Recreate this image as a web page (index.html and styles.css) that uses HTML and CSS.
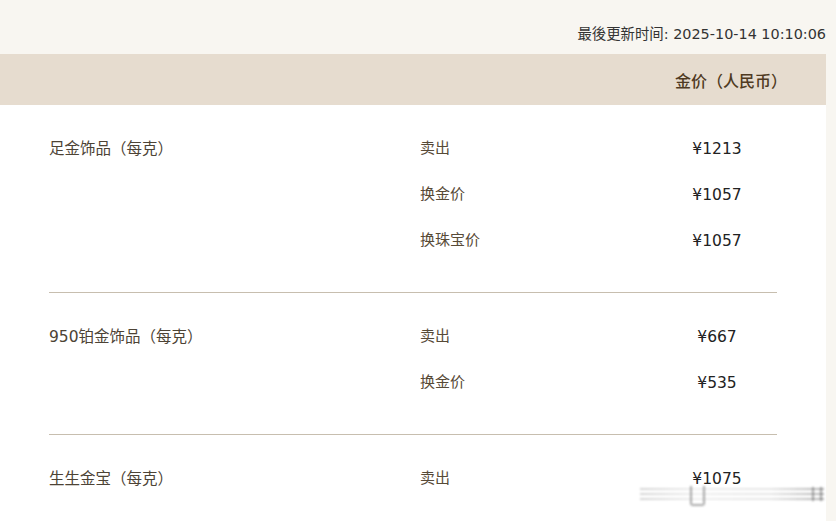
FILE: index.html
```html
<!DOCTYPE html>
<html lang="zh">
<head>
<meta charset="utf-8">
<title>金价</title>
<link rel="stylesheet" href="styles.css">
</head>
<body>
<div class="page">
  <div class="updated">最後更新时间: 2025-10-14 10:10:06</div>
  <div class="panel">
    <div class="head"><span class="head-title">金价（人民币）</span></div>
    <div class="group">
      <div class="name">足金饰品（每克）</div>
      <div class="items">
        <div class="row"><span class="label">卖出</span><span class="price">¥1213</span></div>
        <div class="row"><span class="label">换金价</span><span class="price">¥1057</span></div>
        <div class="row"><span class="label">换珠宝价</span><span class="price">¥1057</span></div>
      </div>
    </div>
    <div class="group">
      <div class="name">950铂金饰品（每克）</div>
      <div class="items">
        <div class="row"><span class="label">卖出</span><span class="price">¥667</span></div>
        <div class="row"><span class="label">换金价</span><span class="price">¥535</span></div>
      </div>
    </div>
    <div class="group last">
      <div class="name">生生金宝（每克）</div>
      <div class="items">
        <div class="row"><span class="label">卖出</span><span class="price">¥1075</span></div>
      </div>
    </div>
  </div>
  <div class="watermark">
    <span class="wm-line l1"></span>
    <span class="wm-line l2"></span>
    <span class="wm-line l3"></span>
    <span class="wm-mark"></span>
    <span class="wm-end"></span>
  </div>
</div>
</body>
</html>
```
FILE: styles.css
```css
html, body {
  margin: 0;
  padding: 0;
  background: #f8f6f1;
  height: 100%;
  overflow: hidden;
}
.page {
  position: relative;
  width: 836px;
  height: 521px;
  font-family: "DejaVu Sans", "Noto Sans CJK SC", sans-serif;
}
.updated {
  height: 54px;
  box-sizing: border-box;
  padding: 25px 10px 0 0;
  text-align: right;
  font-size: 14.4px;
  line-height: 18px;
  color: #333;
}
.panel {
  width: 826px;
  background: #fff;
  height: 467px;
}
.head {
  height: 51px;
  background: #e6dccf;
  display: flex;
  align-items: center;
  justify-content: flex-end;
  padding-right: 39px;
}
.head-title {
  font-family: "Noto Sans CJK SC", sans-serif;
  font-size: 16px;
  font-weight: 500;
  color: #4f3a22;
}
.group {
  margin: 0 49px;
  padding: 20px 0 29px;
  border-bottom: 1px solid #c7beaf;
  display: flex;
}
.group.last {
  border-bottom: none;
}
.name {
  width: 371px;
  line-height: 46px;
  font-size: 15.5px;
  color: #4d4335;
  position: relative;
  top: 1px;
}
.items {
  flex: 1;
  padding-right: 10px;
}
.row {
  display: flex;
  justify-content: space-between;
  line-height: 46px;
  font-size: 15px;
}
.label {
  color: #574a37;
  font-family: "Noto Sans CJK SC", sans-serif;
  position: relative;
  top: -1px;
}
.price {
  width: 100px;
  text-align: center;
  font-size: 15.5px;
  color: #222;
  position: relative;
  top: 1px;
}
.watermark {
  position: absolute;
  left: 640px;
  top: 486px;
  width: 184px;
  height: 20px;
  filter: blur(0.8px);
  opacity: 0.85;
}
.wm-line {
  position: absolute;
  left: 0;
  right: 0;
  height: 2px;
  background: linear-gradient(90deg, rgba(110,110,110,0.35), rgba(200,200,200,0.35) 30%, rgba(170,170,170,0.35) 70%, rgba(90,90,90,0.55));
}
.l1 { top: 2px; }
.l2 { top: 7px; }
.l3 { top: 12px; }
.wm-mark {
  position: absolute;
  left: 50px;
  top: 0;
  width: 11px;
  height: 18px;
  border: 2px solid rgba(60,60,60,0.5);
  border-top: none;
  border-radius: 0 0 3px 3px;
}
.wm-end {
  position: absolute;
  right: 2px;
  top: 1px;
  width: 6px;
  height: 14px;
  border-left: 2px solid rgba(60,60,60,0.5);
  border-right: 2px solid rgba(60,60,60,0.5);
}
```
